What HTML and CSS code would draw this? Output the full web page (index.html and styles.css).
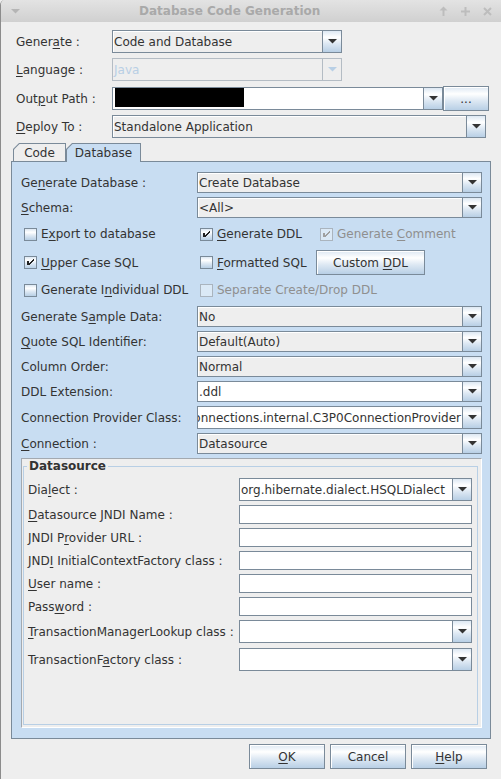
FILE: index.html
```html
<!DOCTYPE html>
<html lang="en">
<head>
<meta charset="utf-8">
<title>Database Code Generation</title>
<link rel="stylesheet" href="styles.css">
</head>
<body>
<div class="window">
  <div class="titlebar">
    <svg class="tb-menu" width="9" height="5" viewBox="0 0 9 5"><path d="M0 0H9L4.5 4.5Z"/></svg>
    <span class="title">Database Code Generation</span>
    <div class="tb-btns">
      <svg width="9" height="10" viewBox="0 0 9 10"><path d="M4.5 0.5L0.5 4.5H3.5V10H5.5V4.5H8.5Z"/></svg>
      <svg width="9" height="9" viewBox="0 0 9 9"><path d="M3.5 0H5.5V3.5H9V5.5H5.5V9H3.5V5.5H0V3.5H3.5Z"/></svg>
      <svg width="9" height="9" viewBox="0 0 9 9"><path class="x" d="M1 1L8 8M8 1L1 8"/></svg>
    </div>
  </div>

  <div class="content">
    <div class="toprow">
      <span class="lbl">Gener<u>a</u>te :</span>
      <div class="combo w230"><span class="val">Code and Database</span><span class="arrow"><svg class="tri" width="9" height="5" viewBox="0 0 9 5"><path d="M0 0H9L4.5 4.5Z"/></svg></span></div>
    </div>
    <div class="toprow">
      <span class="lbl"><u>L</u>anguage :</span>
      <div class="combo w230 disabled"><span class="val">Java</span><span class="arrow"><svg class="tri" width="9" height="5" viewBox="0 0 9 5"><path d="M0 0H9L4.5 4.5Z"/></svg></span></div>
    </div>
    <div class="toprow mt1">
      <span class="lbl">Out<u>p</u>ut Path :</span>
      <div class="combo edit w331"><span class="val top"><span class="redact"></span></span><span class="arrow"><svg class="tri" width="9" height="5" viewBox="0 0 9 5"><path d="M0 0H9L4.5 4.5Z"/></svg></span></div>
      <button class="btn dots"><span>...</span></button>
    </div>
    <div class="toprow">
      <span class="lbl"><u>D</u>eploy To :</span>
      <div class="combo w374"><span class="val">Standalone Application</span><span class="arrow"><svg class="tri" width="9" height="5" viewBox="0 0 9 5"><path d="M0 0H9L4.5 4.5Z"/></svg></span></div>
    </div>

    <div class="tabs">
      <div class="tab code"><div class="tab-in">Code</div></div>
      <div class="tab sel"><div class="tab-in">Database</div></div>
    </div>

    <div class="panel">
      <div class="prow">
        <span>Ge<u>n</u>erate Database :</span>
        <div class="combo"><span class="val">Create Database</span><span class="arrow"><svg class="tri" width="9" height="5" viewBox="0 0 9 5"><path d="M0 0H9L4.5 4.5Z"/></svg></span></div>
      </div>
      <div class="prow">
        <span><u>S</u>chema:</span>
        <div class="combo"><span class="val">&lt;All&gt;</span><span class="arrow"><svg class="tri" width="9" height="5" viewBox="0 0 9 5"><path d="M0 0H9L4.5 4.5Z"/></svg></span></div>
      </div>

      <div class="cbrow">
        <span class="cb"><span class="box"></span><span>E<u>x</u>port to database</span></span>
        <span class="cb"><span class="box"><svg width="11" height="11" viewBox="0 0 11 11"><path d="M2 4h2v4h-2z M8 2h1v2h-1z M7 3h1v2h-1z M6 4h1v2h-1z M5 5h1v2h-1z M4 6h1v2h-1z"/></svg></span><span><u>G</u>enerate DDL</span></span>
        <span class="cb c3 dis"><span class="box"><svg width="11" height="11" viewBox="0 0 11 11"><path d="M2 4h2v4h-2z M8 2h1v2h-1z M7 3h1v2h-1z M6 4h1v2h-1z M5 5h1v2h-1z M4 6h1v2h-1z"/></svg></span><span>Generate <u>C</u>omment</span></span>
      </div>
      <div class="cbrow">
        <span class="cb"><span class="box"><svg width="11" height="11" viewBox="0 0 11 11"><path d="M2 4h2v4h-2z M8 2h1v2h-1z M7 3h1v2h-1z M6 4h1v2h-1z M5 5h1v2h-1z M4 6h1v2h-1z"/></svg></span><span><u>U</u>pper Case SQL</span></span>
        <span class="cb"><span class="box"></span><span><u>F</u>ormatted SQL</span></span>
        <button class="btn cddl"><span>Custom <u>D</u>DL</span></button>
      </div>
      <div class="cbrow">
        <span class="cb"><span class="box"></span><span>Generate I<u>n</u>dividual DDL</span></span>
        <span class="cb dis"><span class="box"></span><span>Separate Create/Drop DDL</span></span>
      </div>

      <div class="prow">
        <span>Generate S<u>a</u>mple Data:</span>
        <div class="combo"><span class="val">No</span><span class="arrow"><svg class="tri" width="9" height="5" viewBox="0 0 9 5"><path d="M0 0H9L4.5 4.5Z"/></svg></span></div>
      </div>
      <div class="prow">
        <span><u>Q</u>uote SQL Identifier:</span>
        <div class="combo"><span class="val">Default(Auto)</span><span class="arrow"><svg class="tri" width="9" height="5" viewBox="0 0 9 5"><path d="M0 0H9L4.5 4.5Z"/></svg></span></div>
      </div>
      <div class="prow">
        <span>Column Order:</span>
        <div class="combo"><span class="val">Normal</span><span class="arrow"><svg class="tri" width="9" height="5" viewBox="0 0 9 5"><path d="M0 0H9L4.5 4.5Z"/></svg></span></div>
      </div>
      <div class="prow">
        <span>DDL Extension:</span>
        <div class="combo edit"><span class="val">.ddl</span><span class="arrow"><svg class="tri" width="9" height="5" viewBox="0 0 9 5"><path d="M0 0H9L4.5 4.5Z"/></svg></span></div>
      </div>
      <div class="prow tall">
        <span>Connection Provider Class:</span>
        <div class="combo edit"><span class="val end"><span class="txt">connections.internal.C3P0ConnectionProvider</span></span><span class="arrow"><svg class="tri" width="9" height="5" viewBox="0 0 9 5"><path d="M0 0H9L4.5 4.5Z"/></svg></span></div>
      </div>
      <div class="prow">
        <span><u>C</u>onnection :</span>
        <div class="combo"><span class="val">Datasource</span><span class="arrow"><svg class="tri" width="9" height="5" viewBox="0 0 9 5"><path d="M0 0H9L4.5 4.5Z"/></svg></span></div>
      </div>

      <div class="dsbox">
        <fieldset class="ds">
          <legend>Datasource</legend>
          <div class="dsrows">
            <div class="dsrow c">
              <span>Dia<u>l</u>ect :</span>
              <div class="combo edit"><span class="val">org.hibernate.dialect.HSQLDialect</span><span class="arrow"><svg class="tri" width="9" height="5" viewBox="0 0 9 5"><path d="M0 0H9L4.5 4.5Z"/></svg></span></div>
            </div>
            <div class="dsrow"><span><u>D</u>atasource JNDI Name :</span><span class="tf"></span></div>
            <div class="dsrow"><span>JNDI P<u>r</u>ovider URL :</span><span class="tf"></span></div>
            <div class="dsrow"><span>JND<u>I</u> InitialContextFactory class :</span><span class="tf"></span></div>
            <div class="dsrow"><span><u>U</u>ser name :</span><span class="tf"></span></div>
            <div class="dsrow"><span>Pass<u>w</u>ord :</span><span class="tf"></span></div>
            <div class="dsrow c">
              <span><u>T</u>ransactionManagerLookup class :</span>
              <div class="combo edit"><span class="val"></span><span class="arrow"><svg class="tri" width="9" height="5" viewBox="0 0 9 5"><path d="M0 0H9L4.5 4.5Z"/></svg></span></div>
            </div>
            <div class="dsrow c mt1">
              <span>TransactionF<u>a</u>ctory class :</span>
              <div class="combo edit"><span class="val"></span><span class="arrow"><svg class="tri" width="9" height="5" viewBox="0 0 9 5"><path d="M0 0H9L4.5 4.5Z"/></svg></span></div>
            </div>
          </div>
        </fieldset>
      </div>
    </div>

    <div class="btnrow">
      <button class="btn"><span><u>O</u>K</span></button>
      <button class="btn"><span>Cancel</span></button>
      <button class="btn"><span><u>H</u>elp</span></button>
    </div>
  </div>
</div>
</body>
</html>
```

FILE: styles.css
```css
* { box-sizing: border-box; }
html, body { margin: 0; padding: 0; }
body {
  width: 501px;
  height: 779px;
  overflow: hidden;
  background: #eeeeee;
  font-family: "DejaVu Sans", "Noto Sans", sans-serif;
  font-size: 12px;
  color: #333333;
}
u {
  text-decoration: underline;
  text-decoration-thickness: 1px;
  text-underline-offset: 2px;
}

/* window frame */
.window {
  height: 779px;
  border-left: 1px solid #8c8c8c;
  border-top-left-radius: 5px;
  display: flex;
  flex-direction: column;
  overflow: hidden;
  background: #eeeeee;
}
.titlebar {
  flex: none;
  height: 22px;
  display: flex;
  align-items: center;
  padding: 0 9px 0 10px;
  background: linear-gradient(#e3e3e3, #d0d0d0);
}
.tb-menu { flex: none; fill: #b5b5b5; display: block; }
.title {
  flex: 1;
  margin-left: 119px;
  font-weight: bold;
  color: #a9a9a9;
  white-space: nowrap;
}
.tb-btns { display: flex; align-items: center; gap: 13px; }
.tb-btns svg { display: block; fill: #bdbdbd; }
.tb-btns .x { fill: none; stroke: #bdbdbd; stroke-width: 2; }

.content {
  flex: 1;
  display: flex;
  flex-direction: column;
  padding: 8px 10px 0 10px;
}

/* top form rows */
.toprow {
  flex: none;
  display: flex;
  align-items: center;
  height: 23px;
  margin-bottom: 5px;
  padding-left: 5px;
}
.toprow.mt1 { margin-top: 1px; }
.toprow .lbl { flex: none; width: 96px; white-space: nowrap; }
.w230 { width: 230px; }
.w331 { width: 331px; }
.w374 { width: 374px; }

/* combo boxes */
.combo {
  flex: none;
  display: flex;
  height: 100%;
  border: 1px solid #7a8a99;
  background: #eeeeee;
}
.combo .val {
  flex: 1;
  min-width: 0;
  display: flex;
  align-items: center;
  padding-left: 1px;
  white-space: nowrap;
  overflow: hidden;
  box-shadow: inset 1px 1px #ffffff;
}
.combo.edit .val { background: #ffffff; box-shadow: none; }
.combo .val.top { align-items: flex-start; }
.combo .val.end { justify-content: flex-end; padding-right: 1px; }
.combo .val .txt { flex: none; }
.combo .arrow {
  flex: none;
  width: 19px;
  border-left: 1px solid #7a8a99;
  display: flex;
  align-items: center;
  justify-content: center;
  background: linear-gradient(#dde8f3 0%, #ffffff 30%, #dde8f3 60%, #b8cfe5 100%);
}
.tri { display: block; fill: #333333; }
.combo.disabled { border-color: #b4bcc4; }
.combo.disabled .val { color: #b8cfe5; box-shadow: none; }
.combo.disabled .arrow { background: #eeeeee; border-left-color: #b4bcc4; }
.combo.disabled .tri { fill: #b8cfe5; }

.redact {
  display: block;
  width: 129px;
  height: 19px;
  margin-left: 1px;
  background: #000000;
}

/* buttons */
.btn {
  flex: none;
  display: flex;
  align-items: center;
  justify-content: center;
  margin: 0;
  padding: 0;
  font: inherit;
  color: #333333;
  white-space: nowrap;
  border: 1px solid #7a8a99;
  box-shadow: inset 1px 1px #ffffff;
  background: linear-gradient(#dde8f3 0%, #ffffff 30%, #dde8f3 60%, #b8cfe5 100%);
}
.btn.dots { width: 46px; height: 25px; }
.btn.cddl { width: 109px; height: 25px; }

/* tabs */
.tabs {
  flex: none;
  position: relative;
  z-index: 1;
  display: flex;
  align-items: flex-start;
  height: 18px;
  padding-left: 2px;
}
.tab {
  height: 18px;
  padding: 1px 1px 0 1px;
  background: #7a8a99;
  clip-path: polygon(0 6px, 6px 0, 100% 0, 100% 100%, 0 100%);
}
.tab-in {
  height: 100%;
  display: flex;
  align-items: center;
  justify-content: center;
  background: #eeeeee;
  clip-path: polygon(0 5.5px, 5.5px 0, 100% 0, 100% 100%, 0 100%);
}
.tab.code { width: 53px; }
.tab.sel { width: 75px; height: 19px; }
.tab.sel .tab-in { background: #c8ddf2; }

/* tab content panel */
.panel {
  flex: none;
  height: 578px;
  display: flex;
  flex-direction: column;
  gap: 4px;
  padding: 10px 8px 10px 9px;
  border: 1px solid #7a8a99;
  background: #c8ddf2;
}
.prow {
  flex: none;
  display: grid;
  grid-template-columns: 176px 285px;
  align-items: center;
  height: 21px;
  white-space: nowrap;
}
.prow.tall { height: 23px; }
.prow .combo { width: 285px; }

.cbrow {
  flex: none;
  display: grid;
  grid-template-columns: 176px 119px auto;
  align-items: center;
  height: 24px;
}
.cb {
  display: flex;
  align-items: center;
  margin-left: 3px;
  white-space: nowrap;
}
.cb.c3 { margin-left: 4px; }
.box {
  flex: none;
  width: 13px;
  height: 13px;
  margin-right: 4px;
  border: 1px solid #7a8a99;
  background: linear-gradient(#dde8f3 0%, #ffffff 30%, #dde8f3 60%, #b8cfe5 100%);
}
.box svg { display: block; fill: #222222; }
.cb.dis { color: #8f8f8f; }
.cb.dis .box { border-color: #aab4be; background: rgba(255, 255, 255, 0.35); }
.cb.dis .box svg { fill: #a0a0a0; }
.cbrow .btn { justify-self: start; }

/* datasource group */
.dsbox {
  flex: 1;
  min-height: 0;
  display: flex;
  padding: 0 3px 2px 1px;
  border: 1px solid;
  border-color: #a3a9b0 #ffffff #ffffff #a3a9b0;
  background: #eeeeee;
}
.ds {
  flex: 1;
  min-width: 0;
  margin: 0;
  padding: 5px 5px 0 4px;
  border: 1px solid #b8cfe5;
}
.ds legend {
  padding: 0 2px;
  margin-left: -1px;
  font-weight: bold;
  line-height: 14px;
}
.dsrows { display: flex; flex-direction: column; gap: 4px; }
.dsrow {
  display: grid;
  grid-template-columns: 211px 233px;
  align-items: center;
  height: 19px;
  white-space: nowrap;
}
.dsrow.c { height: 23px; }
.dsrow.mt1 { margin-top: 1px; }
.dsrow .combo { width: 233px; }
.tf {
  display: block;
  height: 19px;
  border: 1px solid #7a8a99;
  background: #ffffff;
}

/* dialog buttons */
.btnrow {
  flex: none;
  display: flex;
  justify-content: flex-end;
  gap: 5px;
  margin-top: 5px;
  padding-right: 4px;
}
.btnrow .btn { width: 76px; height: 25px; }
```
